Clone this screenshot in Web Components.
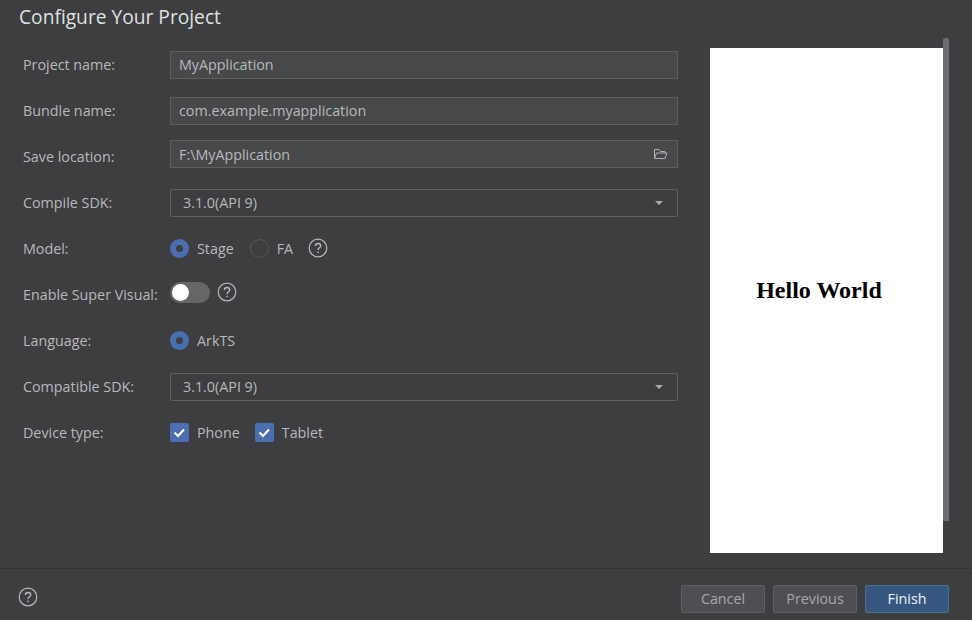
<!DOCTYPE html>
<html>
<head>
<meta charset="utf-8">
<style>
  html, body { margin: 0; padding: 0; height: 100%; background: #3d3e40; overflow: hidden; }
  body { font: 14.3px "Open Sans", "Noto Sans", sans-serif; color: #b6b9bb; }
</style>
</head>
<body>
<wiz-dialog heading="Configure Your Project">
  <form-row label="Project name:" gap="0" shift="-1"><text-field value="MyApplication"></text-field></form-row>
  <form-row label="Bundle name:" gap="18" shift="-1"><text-field value="com.example.myapplication"></text-field></form-row>
  <form-row label="Save location:" gap="15" shift="2"><text-field value="F:\MyApplication" browse></text-field></form-row>
  <form-row label="Compile SDK:" gap="21" shift="-1"><select-field value="3.1.0(API 9)"></select-field></form-row>
  <form-row label="Model:" gap="17">
    <radio-option label="Stage" checked></radio-option>
    <radio-option label="FA" style="margin-left:16px"></radio-option>
    <help-icon style="margin-left:15px"></help-icon>
  </form-row>
  <form-row label="Enable Super Visual:" gap="16" shift="2">
    <toggle-switch></toggle-switch>
    <help-icon style="margin-left:7px"></help-icon>
  </form-row>
  <form-row label="Language:" gap="20"><radio-option label="ArkTS" checked></radio-option></form-row>
  <form-row label="Compatible SDK:" gap="19" shift="-1"><select-field value="3.1.0(API 9)"></select-field></form-row>
  <form-row label="Device type:" gap="17">
    <check-option label="Phone"></check-option>
    <check-option label="Tablet" style="margin-left:15px"></check-option>
  </form-row>
  <phone-preview slot="preview">Hello World</phone-preview>
  <dlg-button slot="actions">Cancel</dlg-button>
  <dlg-button slot="actions">Previous</dlg-button>
  <dlg-button slot="actions" primary>Finish</dlg-button>
</wiz-dialog>

<script>
// small helper so every component reads the same way
function shadow(el, html) {
    el.attachShadow({mode: 'open'});
    el.shadowRoot.innerHTML = html;
}

const HELP_SVG = `<svg width="20" height="20" viewBox="0 0 20 20" fill="none" stroke="#b6b9bb">
    <circle cx="10" cy="10" r="8.8" stroke-width="1.2"/>
    <path d="M7.4 8.1c0-1.6 1.2-2.6 2.7-2.6 1.5 0 2.6 1 2.6 2.3 0 1.9-2.6 2-2.6 4.1" stroke-width="1.4"/>
    <circle cx="10.1" cy="14.3" r="0.9" fill="#b6b9bb" stroke="none"/>
</svg>`;

class WizDialog extends HTMLElement {
    constructor() {
        super();
        shadow(this, `
            <style>
                :host { display: flex; flex-direction: column; height: 620px; }
                h1 {
                    margin: 0; padding: 4px 0 0 19px; height: 38px; box-sizing: border-box;
                    font: 400 19.2px/26px "Open Sans", "Noto Sans", sans-serif; color: #dfe1e2;
                }
                main { flex: 1; display: flex; min-height: 0; }
                .form { width: 655px; margin-left: 23px; padding-top: 13px; }
                .side { margin-left: 32px; }
                footer {
                    height: 51px; border-top: 1px solid #323232; display: flex;
                    align-items: center; justify-content: space-between; padding: 0 23px 0 18px;
                }
                .actions { display: flex; gap: 8px; margin-top: 9px; }
                footer help-icon { margin-top: 5px; }
            </style>
            <h1></h1>
            <main>
                <div class="form"><slot></slot></div>
                <div class="side"><slot name="preview"></slot></div>
            </main>
            <footer>
                <help-icon></help-icon>
                <div class="actions"><slot name="actions"></slot></div>
            </footer>
        `);
    }
    connectedCallback() {
        this.shadowRoot.querySelector('h1').textContent = this.getAttribute('heading');
    }
}

class FormRow extends HTMLElement {
    constructor() {
        super();
        shadow(this, `
            <style>
                :host { display: flex; align-items: center; height: 28px; }
                label { width: 147px; flex: none; white-space: nowrap; }
                .control { flex: 1; display: flex; align-items: center; }
            </style>
            <label></label>
            <div class="control"><slot></slot></div>
        `);
    }
    connectedCallback() {
        const label = this.shadowRoot.querySelector('label');
        label.textContent = this.getAttribute('label');
        // labels in the original don't sit quite centred on their row
        label.style.marginTop = (this.getAttribute('shift') || 0) * 2 + 'px';
        this.style.marginTop = (this.getAttribute('gap') || 0) + 'px';
    }
}

class TextField extends HTMLElement {
    constructor() {
        super();
        shadow(this, `
            <style>
                :host {
                    flex: 1; display: flex; align-items: center; justify-content: space-between;
                    height: 28px; box-sizing: border-box; padding: 0 9px 0 8px;
                    background: #45494a; border: 1px solid #5e6060; white-space: nowrap;
                }
                span { margin-top: -2px; }
                svg { display: none; }
                :host([browse]) span { margin-top: 0; }
                :host([browse]) svg { display: block; }
            </style>
            <span></span>
            <svg width="15" height="12" viewBox="0 0 15 12" fill="none" stroke="#afb1b3" stroke-width="1">
                <path d="M1.5 10.5V1.5H6L7.5 3.5H12V5"/>
                <path d="M1.5 10.5L3.5 5H14L12 10.5Z"/>
            </svg>
        `);
    }
    connectedCallback() {
        this.shadowRoot.querySelector('span').textContent = this.getAttribute('value');
    }
}

class SelectField extends HTMLElement {
    constructor() {
        super();
        shadow(this, `
            <style>
                :host {
                    flex: 1; display: flex; align-items: center; justify-content: space-between;
                    height: 28px; box-sizing: border-box; padding: 0 14px 0 12px;
                    border: 1px solid #5e6060; border-radius: 2px; white-space: nowrap;
                }
                span { margin-top: -2px; }
                i { width: 0; height: 0; border: 4px solid transparent; border-top: 4px solid #a9abad; border-bottom: 0; }
            </style>
            <span></span><i></i>
        `);
    }
    connectedCallback() {
        this.shadowRoot.querySelector('span').textContent = this.getAttribute('value');
    }
}

class RadioOption extends HTMLElement {
    constructor() {
        super();
        shadow(this, `
            <style>
                :host { display: inline-flex; align-items: center; gap: 8px; white-space: nowrap; }
                i { width: 19px; height: 19px; box-sizing: border-box; border-radius: 50%; border: 1px solid #56585a; }
                :host([checked]) i { background: #4a6eaf; border: 0; display: grid; place-items: center; }
                :host([checked]) i::after { content: ""; width: 7px; height: 7px; border-radius: 50%; background: #3d3e40; }
            </style>
            <i></i><span></span>
        `);
    }
    connectedCallback() {
        this.shadowRoot.querySelector('span').textContent = this.getAttribute('label');
    }
}

class CheckOption extends HTMLElement {
    constructor() {
        super();
        shadow(this, `
            <style>
                :host { display: inline-flex; align-items: center; gap: 8px; white-space: nowrap; }
                i { width: 19px; height: 19px; border-radius: 2px; background: #4a6eaf; display: block; }
                svg { display: block; }
            </style>
            <i><svg width="19" height="19" viewBox="0 0 19 19" fill="none" stroke="#fff" stroke-width="2.2"><path d="M4.5 9.5L8 13L14 6.5"/></svg></i>
            <span></span>
        `);
    }
    connectedCallback() {
        this.shadowRoot.querySelector('span').textContent = this.getAttribute('label');
    }
}

class ToggleSwitch extends HTMLElement {
    constructor() {
        super();
        shadow(this, `
            <style>
                :host { display: block; width: 40px; height: 21px; border-radius: 11px; background: #666; padding: 2px; box-sizing: border-box; }
                i { display: block; width: 17px; height: 17px; border-radius: 50%; background: #fff; }
            </style>
            <i></i>
        `);
    }
}

class HelpIcon extends HTMLElement {
    constructor() {
        super();
        shadow(this, `<style>:host { display: block; width: 20px; height: 20px; } svg { display: block; }</style>${HELP_SVG}`);
    }
}

class PhonePreview extends HTMLElement {
    constructor() {
        super();
        shadow(this, `
            <style>
                :host { display: flex; align-items: flex-start; }
                .screen {
                    width: 233px; height: 505px; margin-top: 10px; background: #fff; color: #000;
                    display: flex; align-items: center; justify-content: center; padding: 0 15px 20px 0; box-sizing: border-box;
                    font: 700 24px "Liberation Serif", serif;
                }
                .bar { width: 6px; height: 483px; background: #6b6e71; border-radius: 2px 2px 0 0; }
            </style>
            <div class="screen"><slot></slot></div>
            <div class="bar"></div>
        `);
    }
}

class DlgButton extends HTMLElement {
    constructor() {
        super();
        shadow(this, `
            <style>
                :host {
                    display: flex; align-items: center; justify-content: center;
                    width: 84px; height: 28px; box-sizing: border-box; padding-bottom: 2px; border-radius: 2px;
                    background: #4c5052; border: 1px solid #5e6060; color: #a5a8aa;
                }
                :host([primary]) { background: #365880; border-color: #4c708c; color: #eef1f4; }
            </style>
            <slot></slot>
        `);
    }
}

customElements.define('wiz-dialog', WizDialog);
customElements.define('form-row', FormRow);
customElements.define('text-field', TextField);
customElements.define('select-field', SelectField);
customElements.define('radio-option', RadioOption);
customElements.define('check-option', CheckOption);
customElements.define('toggle-switch', ToggleSwitch);
customElements.define('help-icon', HelpIcon);
customElements.define('phone-preview', PhonePreview);
customElements.define('dlg-button', DlgButton);
</script>
</body>
</html>
